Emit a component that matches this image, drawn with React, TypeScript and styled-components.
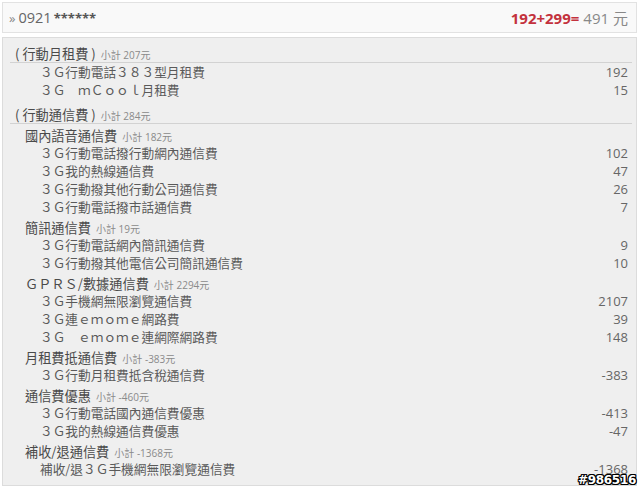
import React from "react";
import styled, { createGlobalStyle } from "styled-components";

const Global = createGlobalStyle`
  html, body { margin: 0; padding: 0; background: #ffffff; }
  body { font-family: "Open Sans", "Noto Sans CJK TC", sans-serif; }
`;

const Page = styled.div`
  position: relative;
  width: 640px;
  height: 489px;
  padding: 2px 3px 0 2px;
  box-sizing: border-box;
  display: flex;
  flex-direction: column;
  gap: 4px;
  overflow: hidden;
`;

const Header = styled.div`
  height: 31px;
  box-sizing: border-box;
  border: 1px solid #e2e2e2;
  background: #f9f9f9;
  display: flex;
  align-items: center;
  justify-content: space-between;
  padding: 0 8px 0 6px;
`;

const Phone = styled.div`
  display: flex;
  align-items: baseline;
  color: #666;
`;

const Chevron = styled.span`
  font-size: 13px;
  color: #888;
  margin-right: 3px;
`;

const PhoneNum = styled.span`
  font-size: 14.5px;
  color: #666;
  margin-right: 2px;
`;

const Stars = styled.span`
  font-size: 13px;
  font-weight: 700;
  color: #555;
`;

const Total = styled.div`
  display: flex;
  align-items: baseline;
  gap: 4px;
`;

const Formula = styled.span`
  font-size: 15px;
  font-weight: 700;
  color: #c3323d;
`;

const Amount = styled.span`
  font-size: 15px;
  color: #888;
`;

const Panel = styled.div`
  height: 449px;
  box-sizing: border-box;
  border: 1px solid #dcdcdc;
  background: #efefef;
  padding: 0 4px 0 7px;
  display: flex;
  flex-direction: column;
`;

const SectionHead = styled.div`
  padding-top: 8px;
  height: 25px;
  box-sizing: border-box;
  line-height: 16px;
  border-bottom: 1px solid #d2d2d2;
  display: flex;
  align-items: baseline;
  padding-left: 5px;
  font-family: "Noto Sans CJK TC", sans-serif;
  font-size: 13.2px;
  color: #4a4a4a;
  white-space: pre;
`;

const SubHead = styled.div`
  padding-top: 4px;
  height: 20px;
  box-sizing: border-box;
  line-height: 16px;
  display: flex;
  align-items: baseline;
  padding-left: 15px;
  font-family: "Noto Sans CJK TC", sans-serif;
  font-size: 13.2px;
  color: #4a4a4a;
`;

const Subtotal = styled.span`
  font-family: "Open Sans", "Noto Sans CJK TC", sans-serif;
  font-size: 10px;
  color: #8a8a8a;
  margin-left: 5px;
`;

const Item = styled.div`
  height: 18px;
  line-height: 18px;
  display: flex;
  justify-content: space-between;
  padding-left: 30px;
  padding-right: 4px;
`;

const ItemName = styled.span`
  font-family: "Noto Sans CJK TC", sans-serif;
  font-size: 12.7px;
  color: #5a5a5a;
`;

const ItemValue = styled.span`
  font-family: "Open Sans", sans-serif;
  font-size: 13px;
  color: #666;
`;

const Watermark = styled.div`
  position: absolute;
  right: 4px;
  bottom: 2px;
  font-family: "DejaVu Sans", sans-serif;
  font-weight: 700;
  font-size: 12px;
  color: #fff;
  letter-spacing: -0.3px;
  text-shadow: -1px -1px 0 #000, 1px -1px 0 #000, -1px 1px 0 #000, 1px 1px 0 #000,
    0 1px 0 #000, 0 -1px 0 #000, 1px 0 0 #000, -1px 0 0 #000;
`;

type Row =
  | { kind: "section"; title: string; sub: string }
  | { kind: "sub"; title: string; sub: string }
  | { kind: "item"; name: string; value: string };

const rows: Row[] = [
  { kind: "section", title: "( 行動月租費 )", sub: "小計 207元" },
  { kind: "item", name: "３Ｇ行動電話３８３型月租費", value: "192" },
  { kind: "item", name: "３Ｇ　ｍＣｏｏｌ月租費", value: "15" },
  { kind: "section", title: "( 行動通信費 )", sub: "小計 284元" },
  { kind: "sub", title: "國內語音通信費", sub: "小計 182元" },
  { kind: "item", name: "３Ｇ行動電話撥行動網內通信費", value: "102" },
  { kind: "item", name: "３Ｇ我的熱線通信費", value: "47" },
  { kind: "item", name: "３Ｇ行動撥其他行動公司通信費", value: "26" },
  { kind: "item", name: "３Ｇ行動電話撥市話通信費", value: "7" },
  { kind: "sub", title: "簡訊通信費", sub: "小計 19元" },
  { kind: "item", name: "３Ｇ行動電話網內簡訊通信費", value: "9" },
  { kind: "item", name: "３Ｇ行動撥其他電信公司簡訊通信費", value: "10" },
  { kind: "sub", title: "ＧＰＲＳ/數據通信費", sub: "小計 2294元" },
  { kind: "item", name: "３Ｇ手機網無限瀏覽通信費", value: "2107" },
  { kind: "item", name: "３Ｇ連ｅｍｏｍｅ網路費", value: "39" },
  { kind: "item", name: "３Ｇ　ｅｍｏｍｅ連網際網路費", value: "148" },
  { kind: "sub", title: "月租費抵通信費", sub: "小計 -383元" },
  { kind: "item", name: "３Ｇ行動月租費抵含稅通信費", value: "-383" },
  { kind: "sub", title: "通信費優惠", sub: "小計 -460元" },
  { kind: "item", name: "３Ｇ行動電話國內通信費優惠", value: "-413" },
  { kind: "item", name: "３Ｇ我的熱線通信費優惠", value: "-47" },
  { kind: "sub", title: "補收/退通信費", sub: "小計 -1368元" },
  { kind: "item", name: "補收/退３Ｇ手機網無限瀏覽通信費", value: "-1368" },
];

export default function App() {
  return (
    <>
      <Global />
      <Page>
        <Header>
          <Phone>
            <Chevron>»</Chevron>
            <PhoneNum>0921</PhoneNum>
            <Stars>******</Stars>
          </Phone>
          <Total>
            <Formula>192+299=</Formula>
            <Amount>491 元</Amount>
          </Total>
        </Header>
        <Panel>
          {rows.map((r, i) => {
            if (r.kind === "section")
              return (
                <SectionHead key={i}>
                  {r.title}
                  <Subtotal>{r.sub}</Subtotal>
                </SectionHead>
              );
            if (r.kind === "sub")
              return (
                <SubHead key={i}>
                  {r.title}
                  <Subtotal>{r.sub}</Subtotal>
                </SubHead>
              );
            return (
              <Item key={i}>
                <ItemName>{r.name}</ItemName>
                <ItemValue>{r.value}</ItemValue>
              </Item>
            );
          })}
        </Panel>
        <Watermark>#986516</Watermark>
      </Page>
    </>
  );
}
